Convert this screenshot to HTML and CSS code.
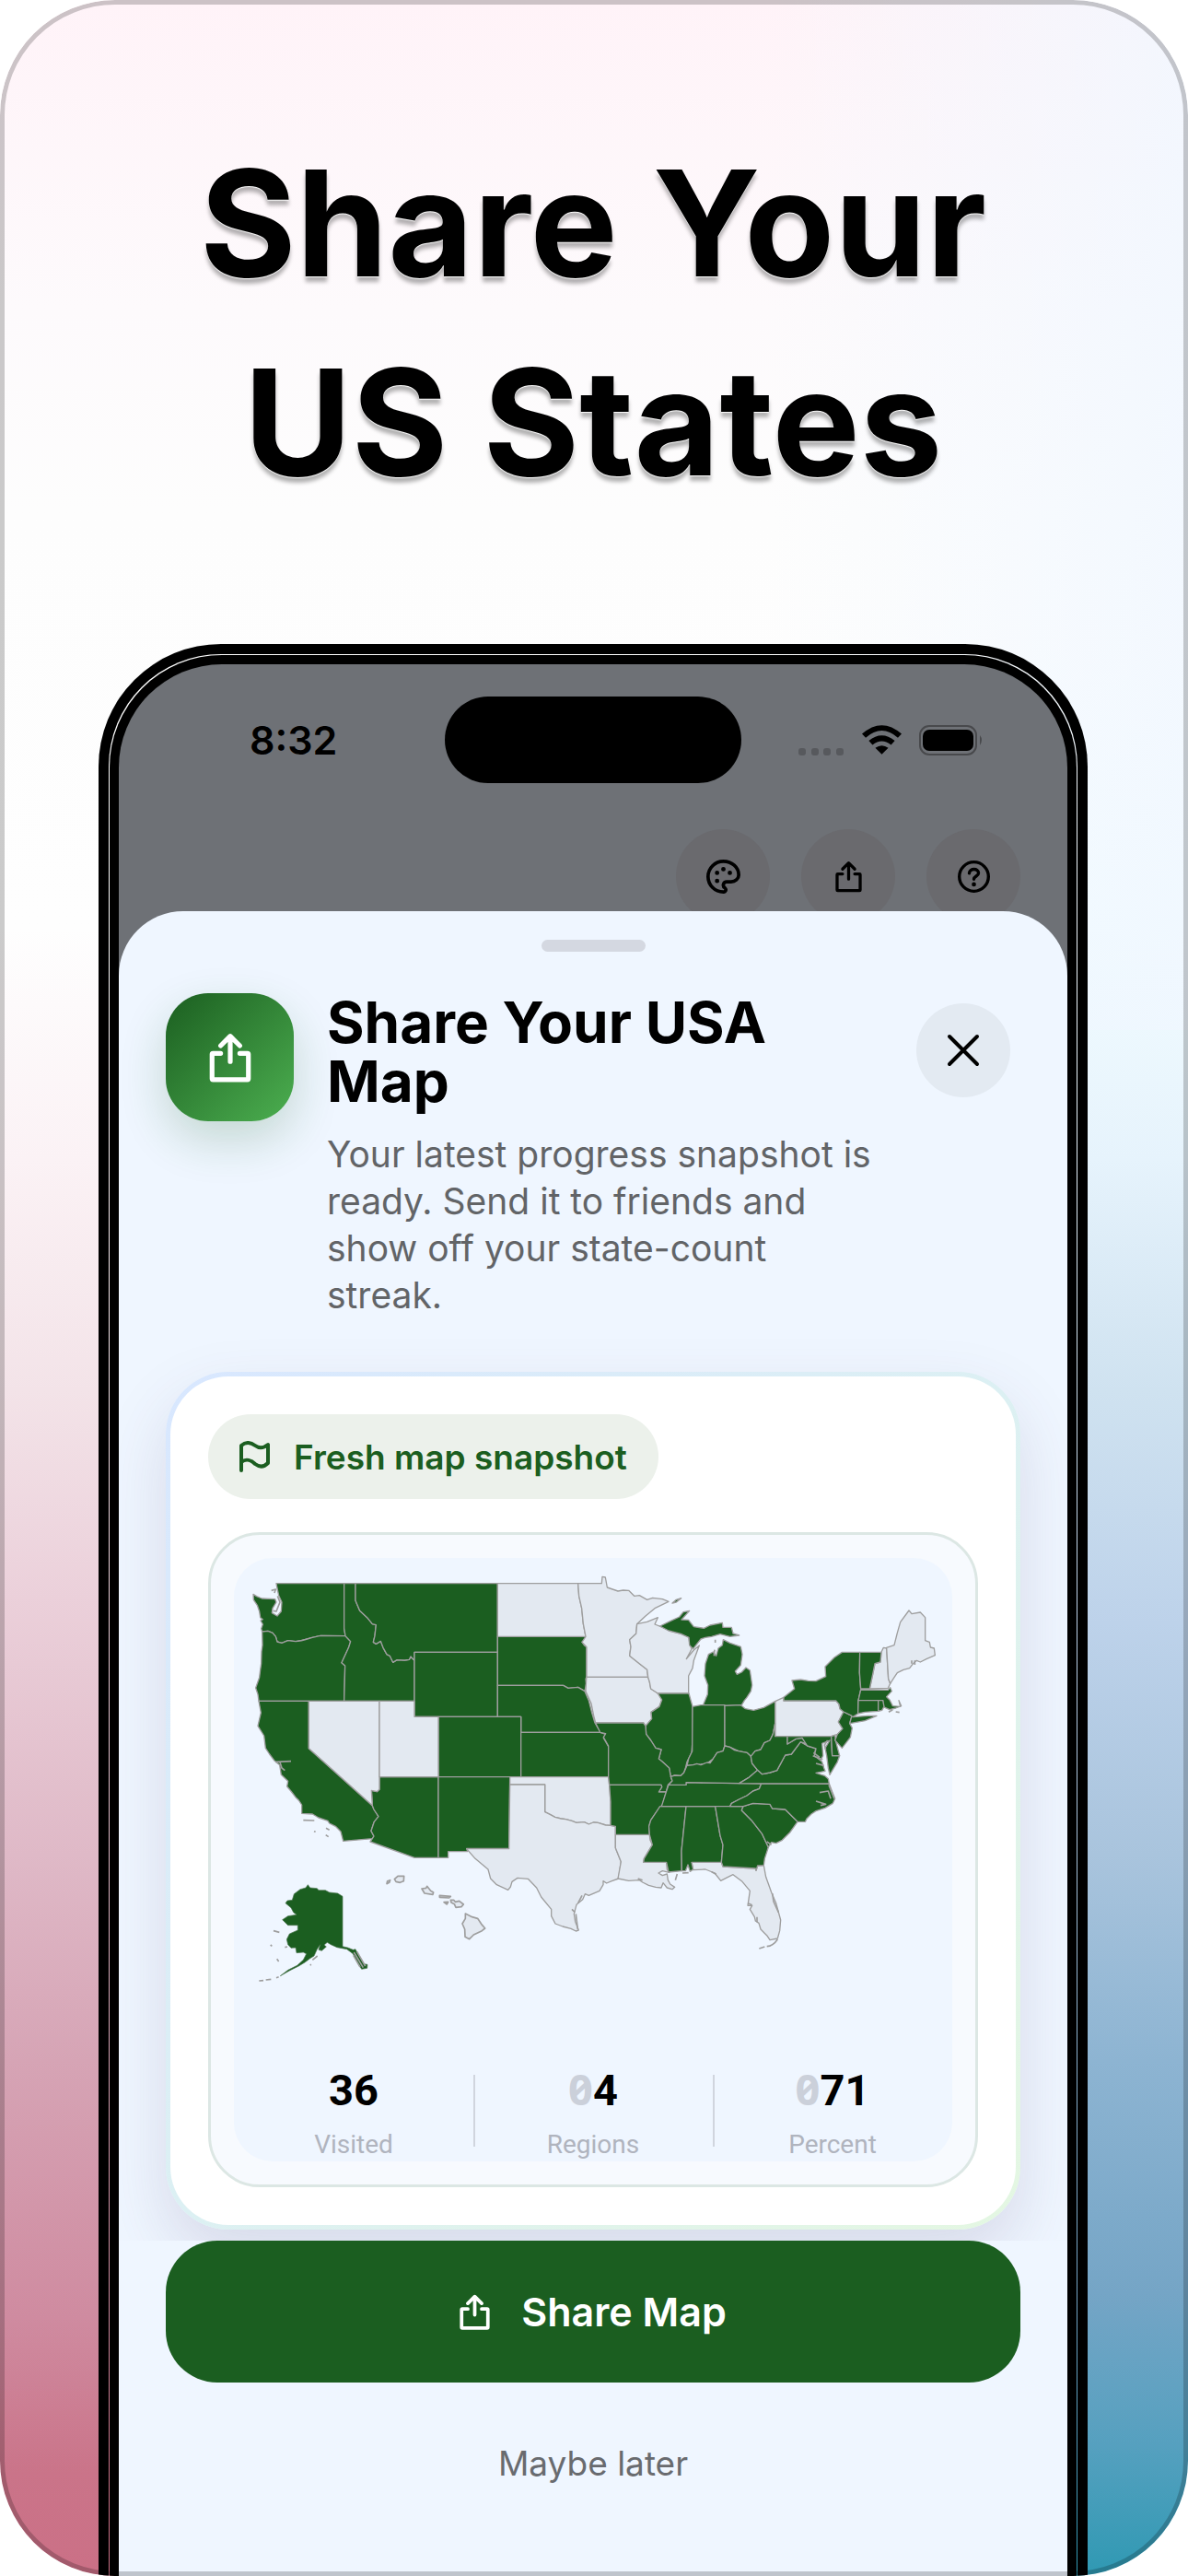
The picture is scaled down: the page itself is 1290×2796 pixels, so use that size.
FILE: index.html
```html
<!DOCTYPE html>
<html lang="en">
<head>
    <meta charset="utf-8">
    <meta name="viewport" content="width=device-width, initial-scale=1">
    <title>Share Your US States</title>
    <link rel="stylesheet" href="styles.css">
</head>
<body>
    <!-- Shared icon shapes -->
    <svg class="icon-defs" width="0" height="0" aria-hidden="true">
        <symbol id="icon-share" viewBox="0 0 88 104">
            <path d="M24 43H8Q6 43 6 45V96Q6 98 8 98H80Q82 98 82 96V45Q82 43 80 43H64M44 60V8M24 27L44 7L64 27" fill="none" stroke="currentColor" stroke-width="10" stroke-linecap="round" stroke-linejoin="round"/>
        </symbol>
    </svg>

    <main class="poster">
        <h1 class="poster-title">Share Your<br>US States</h1>

        <div class="phone">
            <div class="screen">
                <div class="status-bar">
                    <span class="time">8:32</span>
                    <div class="island"></div>
                    <div class="status-icons">
                        <svg class="dots" viewBox="0 0 50 8" width="50" height="8" fill="#57595d">
                            <rect x="0" width="8" height="8" rx="3"/><rect x="14" width="8" height="8" rx="3"/>
                            <rect x="27" width="8" height="8" rx="3"/><rect x="41" width="8" height="8" rx="3"/>
                        </svg>
                        <svg viewBox="0 0 128 94" width="43" height="32">
                            <path d="M0 28Q64 -28 128 28L116 40Q64 -6 12 40Z"/>
                            <path d="M22 50Q64 16 106 50L94 63Q64 40 34 63Z"/>
                            <path d="M43 73Q64 58 85 73L64 94Z"/>
                        </svg>
                        <svg viewBox="0 0 70 33" width="70" height="33">
                            <rect x="1" y="1" width="61" height="31" rx="10" fill="none" stroke="#48494c" stroke-width="2"/>
                            <rect x="4" y="5" width="55" height="23" rx="7"/>
                            <path d="M66 11Q70 16 66 22Z" fill="#48494c"/>
                        </svg>
                    </div>
                </div>

                <div class="toolbar">
                    <button class="tool-button" type="button" aria-label="Theme">
                        <svg viewBox="2 2 20 20" width="37" height="37" fill="none" stroke="currentColor" stroke-width="2" stroke-linecap="round" stroke-linejoin="round">
                            <path d="M12 21a9 9 0 0 1 0 -18c4.97 0 9 3.582 9 8c0 1.06 -.474 2.078 -1.318 2.828c-.844 .75 -1.989 1.172 -3.182 1.172h-2.5a2 2 0 0 0 -1 3.75a1.3 1.3 0 0 1 -1 2.25"/>
                            <path d="M8.3 9.8v.01M12 7.6v.01M15.8 9.8v.01M8.3 14.5v.01" stroke-width="2.6"/>
                        </svg>
                    </button>
                    <button class="tool-button" type="button" aria-label="Share">
                        <svg width="29" height="35"><use href="#icon-share"/></svg>
                    </button>
                    <button class="tool-button" type="button" aria-label="Help">
                        <svg viewBox="0 0 104 104" width="35" height="35" fill="none" stroke="currentColor" stroke-width="10" stroke-linecap="round">
                            <circle cx="52" cy="52" r="47"/>
                            <path d="M37 41C38 24 67 24 67 41C67 50 52 51 52 60"/>
                            <circle cx="52" cy="77" r="7" fill="currentColor" stroke="none"/>
                        </svg>
                    </button>
                </div>

                <section class="sheet">
                    <div class="sheet-scroll">
                        <div class="handle"></div>

                        <header class="sheet-header">
                            <div class="share-tile">
                                <svg width="46" height="54"><use href="#icon-share"/></svg>
                            </div>
                            <div class="sheet-text">
                                <h2>Share Your USA Map</h2>
                                <p>Your latest progress snapshot is ready. Send it to friends and show off your state-count streak.</p>
                            </div>
                            <button class="close-button" type="button" aria-label="Close">
                                <svg viewBox="0 0 36 36" width="36" height="36" stroke="currentColor" stroke-width="4" stroke-linecap="round">
                                    <path d="M3 3L33 33M33 3L3 33"/>
                                </svg>
                            </button>
                        </header>

                        <article class="card">
                            <div class="badge">
                                <svg viewBox="0 0 33 34" width="33" height="34" fill="none" stroke="currentColor" stroke-width="4" stroke-linecap="round" stroke-linejoin="round">
                                    <path d="M2 32V5C8 0 13 2 17 5C21 8 26 8 31 4V24C26 29 21 28 17 25C13 21 7 19 2 23"/>
                                </svg>
                                Fresh map snapshot
                            </div>

                            <div class="map-frame">
                                <div class="map-panel">
                                    <svg class="map" viewBox="14 6 2340 1650" role="img" aria-label="Map of visited US states">
                                        <!-- West -->
                                        <g class="visited">
                                            <path d="M152 89H373V235L377 260L297 259C265 264 245 275 215 278L190 275L170 283L155 279L150 262L140 250L125 244L106 246L103 236L108 222L101 210L108 206L100 200L97 180L90 160L78 142L77 124L88 131L105 138L148 140L152 150L140 170L138 185L155 195L168 180L170 150L160 128L155 105Z"/>
                                            <path d="M106 246L125 244L140 250L150 262L155 279L170 283L190 275L215 278C245 275 265 264 297 259L377 260L394 278L388 297L365 347L376 357L373 472H95L92 450L85 429L97 395L100 370L103 350L104 310L107 290Z"/>
                                            <path d="M373 89H410V145L424 178L448 200L465 221L477 224L473 260L468 280L477 286L492 277L500 298L512 320L522 325L532 346L545 338L570 339L585 337L590 327L602 340V472H373L376 357L365 347L388 297L394 278L377 260L373 235Z"/>
                                            <path d="M410 89H873V313H602V340L590 327L585 337L570 339L545 338L532 346L522 325L512 320L500 298L492 277L477 286L468 280L473 260L477 224L465 221L448 200L424 178L410 145Z"/>
                                            <path d="M602 313H873V523H602Z"/>
                                            <path d="M873 262H1160L1158 272L1148 280L1155 290L1163 296V394L1160 400L1162 415L1157 440L1135 427L1103 430L1087 421H873Z"/>
                                            <path d="M873 421H1087L1103 430L1135 427L1157 440L1170 470L1180 510L1190 543L1200 560L1210 574H949V523H873Z"/>
                                            <path d="M680 523H949V719H680Z"/>
                                            <path d="M949 574H1207L1225 580L1218 592L1234 620V719H949Z"/>
                                            <path d="M95 472H258V626L465 812L470 825L485 848L471 865L461 895L470 912L465 920L370 928L362 897L345 880L325 870L320 862L290 852L270 840L235 838L235 810L225 795L215 785L202 768L187 750L190 733L168 712L163 680L145 665L130 645L117 625L112 585L92 553L102 510Z"/>
                                            <path d="M488 719H680V982H602L458 930L465 920L470 912L461 895L471 865L485 848L470 825L465 812L462 763L480 767L488 760Z"/>
                                            <path d="M680 719H913L910 952H772L775 962H712V982H680Z"/>
                                        </g>
                                        <g class="unvisited">
                                            <path d="M258 472H488V760L480 767L462 763L465 812L258 626Z"/>
                                            <path d="M488 472H602V523H680V719H488Z"/>
                                            <path d="M873 89H1135L1138 130L1147 170L1152 220L1160 262H873Z"/>
                                            <path d="M913 719H1234L1237 745L1241 800V877L1225 876L1200 868L1185 867L1170 873L1155 866L1130 868L1115 862L1095 857L1080 855L1060 850L1045 842L1027 833V744H913Z"/>
                                            <path d="M913 744H1027V833L1045 842L1060 850L1080 855L1095 857L1115 862L1130 868L1155 866L1170 873L1185 867L1200 868L1225 876L1241 877L1257 880V950L1275 995L1267 1050L1245 1058L1228 1065L1217 1058V1070L1205 1090L1170 1105L1158 1100L1150 1118L1130 1135L1126 1150L1122 1165L1126 1190L1137 1218L1128 1221L1112 1213L1085 1206L1061 1197L1048 1172V1150L1015 1110L1000 1080L972 1051L938 1048L920 1060L915 1077L907 1087L870 1070L850 1050L842 1020L800 985L772 953H910Z"/>
                                        </g>
                                        <path class="islets" d="M136 112L150 108L146 120M156 130L164 150L152 180L142 178M150 670L200 668M163 668L170 690L180 698M240 860L276 861M275 896L280 898M314 886L325 892M313 908L322 914M1128 1165L1134 1215M1115 1150L1125 1160M1148 1105L1135 1130"/>

                                        <!-- East -->
                                        <g transform="translate(1110 0)">
                                            <g class="unvisited">
                                                <path d="M25 89H102L104 67L114 69L120 102L155 114L172 111L190 112L208 130L225 128L250 142L268 136L300 140L320 148L275 170L245 195L217 221L214 253L193 272L197 295L193 325L225 350L250 370L253 394H53V296L38 280L50 262L42 220L37 170L28 130Z"/>
                                                <path d="M53 394H253L258 410L262 432L285 447L298 468L290 490L263 508L265 530L245 553L238 543H82L76 520L68 480L50 440L52 400Z"/>
                                                <path d="M217 221L250 214L285 200L275 222L295 230L330 245L360 253L385 262L388 280L395 303L378 335L402 306L420 291L402 340L398 365L385 390V447H285L262 432L258 410L253 394L250 370L225 350L193 325L197 295L193 272L214 253Z"/>
                                                <path d="M667 473L695 460V471H865L875 482L878 497L890 507L873 540L887 562L870 580L850 587H667Z"/>
                                                <path d="M1013 313L1020 298L1030 300L1036 400L1042 415L1035 430L975 432L985 385L992 350L1010 345Z"/>
                                                <path d="M1030 298L1055 290L1065 250L1075 215L1103 177L1112 188L1140 183L1156 200V275L1170 280L1173 297L1185 300L1188 323L1160 335L1140 345L1128 340L1115 352L1105 365L1085 370L1065 380L1055 395L1042 415L1036 400Z"/>
                                                <path d="M147 907H258L260 925L267 940L240 985L238 997H313L315 1020L322 1030L300 1025L287 1032L300 1040L315 1035L318 1055L325 1068L340 1078L332 1085L315 1080L302 1064L296 1080L278 1078L255 1072L235 1062L225 1055L190 1057L155 1050L165 995L147 950Z"/>
                                                <path d="M395 997H492L497 1011L603 1017L605 1024L610 1008L630 1007L637 1045L655 1095L670 1130L685 1185L682 1220L675 1245L650 1250L640 1235L620 1215L614 1195L603 1188L600 1175L585 1150L592 1138L578 1138L585 1090L560 1060L530 1037L512 1046L490 1057L470 1032L440 1020L400 1022Z"/>
                                            </g>
                                            <g class="visited">
                                                <path d="M292 228L325 212L355 198L368 182L388 178L362 207L385 208L402 230L435 235L455 225L495 217L497 232L525 232L530 252L550 258L520 262L488 254L460 262L440 265L425 270L400 302L388 290L386 265L360 253L320 243Z"/>
                                                <path d="M498 272L520 283L555 295L560 320L555 355L537 375L543 385L558 378L572 363L585 372L592 420L588 440L575 460L567 470L558 485L503 487L433 484L447 450L448 420L437 390L440 350L450 320L465 312L475 325L482 300L495 290Z"/>
                                                <path d="M285 447H386L398 490V600L395 640L380 670L375 690L370 705L360 715L340 714L327 718L322 690L300 670L288 660L296 630L278 625L262 600L247 580L245 553L265 530L263 508L290 490L298 468Z"/>
                                                <path d="M398 490L425 485H503V618L497 635L478 640L465 660L445 675L425 678L400 680L380 682L385 660L397 635Z"/>
                                                <path d="M503 487L555 485L570 497L597 502L630 493L667 473V545L660 580L650 600L632 608L620 630L602 635L588 652L575 640L548 635L520 622L503 618Z"/>
                                                <path d="M82 543H238L245 553L247 580L262 600L278 625L296 630L288 660L300 670L322 690L327 718L332 732L318 745L312 768H288L298 752L296 745H127L124 719V618L108 590L115 578L97 574Z"/>
                                                <path d="M127 745H296L298 752L288 768H312L300 810L290 820L262 860L256 880L258 907H147V880L131 877V800Z"/>
                                                <path d="M292 815H377L362 960L363 1025L320 1029L313 997H238L240 985L267 940L258 907L256 880L262 860Z"/>
                                                <path d="M377 815H472L488 910L497 940L492 997H395L400 1020L390 1027L383 1005L375 1025H363L362 960Z"/>
                                                <path d="M297 815L312 768L320 745H377V737L622 741L615 758L595 765L575 780L550 792L525 805L520 815Z"/>
                                                <path d="M327 718L340 714L360 715L370 705L380 682L400 680L412 676L425 680L445 672L455 674L465 660L478 640L497 635L503 618L520 622L535 632L548 635L575 640L588 652L592 675L610 697L580 722L550 740L377 737V745H320L332 732Z"/>
                                                <path d="M472 815H563L558 828L590 860L625 905L645 948L633 985L630 1007L610 1008L605 1024L603 1017L497 1011L492 997L497 940L488 910Z"/>
                                                <path d="M558 828L563 815L595 805L650 808L658 822L700 825L740 865L715 900L690 925L670 935L655 932L645 948L625 905L590 860Z"/>
                                                <path d="M520 815L525 805L550 792L575 780L595 765L615 758L622 741H843L852 765L862 790L855 805L830 820L800 830L785 840L770 855L765 865H740L700 825L658 822L650 808L595 805L563 815Z"/>
                                                <path d="M550 740L580 722L610 697L625 710L650 705L673 698L700 648L720 645L750 605L772 618L800 625L795 645L820 670L826 690L830 700L800 706L828 715L840 725L843 741Z"/>
                                                <path d="M588 652L602 635L620 630L632 608L650 600L660 580L667 545V587H707V612L735 595L755 592L772 612L750 605L720 645L700 648L673 698L650 705L625 710L610 697L592 675Z"/>
                                                <path d="M707 587H850L853 650H877L870 670L845 712L840 690L835 650L830 625L845 600L820 610L823 650L815 665L795 650L800 627L772 618L755 592L735 595L707 612Z"/>
                                                <path d="M850 587L862 583L865 605L877 650H853Z"/>
                                                <path d="M890 507L917 520L910 545L918 560L912 590L885 625L862 600L870 580L887 562L873 540Z"/>
                                                <path d="M695 471V460L730 432L722 405L750 402L775 406L800 407L832 392L830 360L860 330L885 313H943L942 380L946 435L938 470L937 513L920 524L970 520L998 520L960 536L910 545L917 520L890 507L878 497L875 482L865 471Z"/>
                                                <path d="M943 313H1013L1010 345L992 350L985 385L975 432H946L942 380Z"/>
                                                <path d="M946 435L1035 436L1042 428L1047 440L1030 458L1040 468L1050 488L1075 490L1070 470L1078 488L1060 495L1040 500L1018 490V470H938Z"/>
                                                <path d="M938 470H1003V505L960 508L937 513Z"/>
                                                <path d="M1003 470H1018L1022 490L1015 502L1003 505Z"/>
                                                <path d="M332 153L345 142L361 137L345 150Z"/>
                                            </g>
                                            <path class="islets" d="M675 1248Q660 1270 640 1271M633 1272L615 1278M658 1098L662 1125L678 1160M472 272V282M470 305L468 325M348 1035L342 1055M365 1032L385 1031M838 600L828 615L832 630M790 650L822 662M792 640L812 655M800 675L826 682M812 770L840 765L848 790M800 798L832 808L815 812M842 745L860 790M1037 508L1050 500M1060 507L1072 509M1112 350V340M1122 354V340M578 1130L592 1136M608 1175V1192M220 1050L235 1055M460 1028L475 1036M640 930L655 940"/>
                                        </g>

                                        <!-- Alaska and Hawaii -->
                                        <g transform="translate(0 930)">
                                            <path class="visited alaska" d="M255 140L262 150L285 152L290 158L312 158L325 165L352 168L368 178V341L385 345L402 352L410 350L420 370L430 385L438 398L449 400L448 412L430 415L420 400L412 385L402 365L382 350L350 344L330 335L318 328L308 336L315 342L300 355L290 352L295 335L285 350L275 372L262 380L245 393L225 405L195 420L165 437L190 418L220 403L240 385L250 365L240 360L218 362L215 345L200 346L190 335L186 318L195 300L222 288V272H190L172 254L190 242L218 238L208 230L200 215L182 200L188 192L204 190L210 170L230 155L248 150Z"/>
                                            <path class="islets" d="M143 290L162 295M133 336L138 340M154 382L160 390M180 344L188 342M160 440L152 443M135 448L118 450M110 452L96 453M262 402L266 400M270 385L286 372M405 360L435 410M415 358L442 405M403 370L425 408"/>
                                            <g class="unvisited hawaii">
                                                <path d="M512 137L514 128L523 125L520 133Z"/><path d="M537 122L548 112L568 112L567 128L555 133L542 130Z"/>
                                                <path d="M626 153L640 151L643 145L655 160L664 165L662 172L635 168Z"/><path d="M684 175L720 178L715 183L684 181Z"/>
                                                <path d="M698 197L712 196L708 204Z"/><path d="M720 190L730 190L735 196L748 193L762 204L755 212L737 214L732 203L722 198Z"/>
                                                <path d="M768 234L790 245L808 250L820 268L832 282L822 290L795 303L781 317L767 310L766 285L758 267L768 250Z"/>
                                            </g>
                                        </g>
                                    </svg>

                                    <dl class="stats">
                                        <div class="stat"><dd>36</dd><dt>Visited</dt></div>
                                        <div class="stat"><dd><span class="pad-digit">0</span>4</dd><dt>Regions</dt></div>
                                        <div class="stat"><dd><span class="pad-digit">0</span>71</dd><dt>Percent</dt></div>
                                    </dl>
                                </div>
                            </div>
                        </article>
                    </div>

                    <footer class="sheet-footer">
                        <button class="share-button" type="button">
                            <svg width="33" height="39"><use href="#icon-share"/></svg>
                            Share Map
                        </button>
                        <button class="later-button" type="button">Maybe later</button>
                    </footer>
                </section>
            </div>
        </div>
    </main>
</body>
</html>
```
FILE: styles.css
```css
/* --- Base --- */
* { box-sizing: border-box; }
body { margin: 0; background-color: #fff; font-family: Inter, "Liberation Sans", sans-serif; color: #000; }
h1, h2, p, dl, dd { margin: 0; }
button { font: inherit; color: inherit; border: none; padding: 0; cursor: pointer; }
svg { display: block; flex-shrink: 0; }
.icon-defs { position: absolute; }

/* --- Poster --- */
.poster {
    position: relative;
    display: flex;
    flex-direction: column;
    min-height: 100vh;
    padding: 134px 109px 0 107px;
    border-radius: 125px;
    overflow: hidden;
    background:
        linear-gradient(to right, rgba(240, 246, 255, 0) 65%, rgba(240, 247, 255, 0.8)) top / 100% 40% no-repeat,
        linear-gradient(rgba(242, 252, 255, 0) 25%, #f2fcff 36%, #e6f3fc 45%, #cfe2f0 54%, #bdd2ea 63%, #a9c4dd 72%, #8db4d2 80%, #75a5c6 89%, #55a0bf 95%, #2f99b3) right / 50% 100% no-repeat,
        linear-gradient(#fff3f8, #fdfafc 12%, #fdfdfd 20%, #fefefe 36%, #fbf2f5 45%, #f3e3e8 54%, #ebd0da 62%, #dfb9c7 72%, #d6a4b5 80%, #cf8ba0 90%, #ca7489 96%, #cb7086);
}
/* Thin outline drawn on top of everything, the phone included */
.poster::after {
    content: "";
    position: absolute;
    inset: 0;
    border: 5px solid rgba(0, 0, 0, 0.2);
    border-radius: 125px;
    pointer-events: none;
}
.poster-title {
    font-size: 160px;
    line-height: 216px;
    font-weight: 700;
    text-align: center;
    text-shadow: 0 1px 1px #fff, 0 6px 4px rgba(0, 0, 0, 0.3);
}

/* --- Phone --- */
.phone {
    flex: 1;
    display: flex;
    margin-top: 133px;
    padding: 1px 1px 0;
    border: 11px solid #000;
    border-bottom: none;
    border-radius: 133px 133px 0 0;
}
.screen {
    flex: 1;
    display: flex;
    flex-direction: column;
    border: 10px solid #000;
    border-bottom: none;
    border-radius: 122px 122px 0 0;
    background-color: #6e7176;
    overflow: hidden;
}
.status-bar {
    display: grid;
    grid-template-columns: 1fr 322px 1fr;
    align-items: center;
    padding-top: 35px;
}
.time { padding-left: 142px; font-size: 43px; line-height: 52px; font-weight: 600; }
.island { height: 94px; border-radius: 47px; background-color: #000; }
.status-icons {
    display: flex;
    justify-content: flex-end;
    align-items: center;
    gap: 19px;
    padding-right: 91px;
}
.dots { align-self: flex-end; }

.toolbar { display: flex; justify-content: flex-end; gap: 34px; padding: 50px 51px 0; }
.tool-button {
    display: flex;
    align-items: center;
    justify-content: center;
    width: 102px;
    height: 102px;
    border-radius: 50%;
    background-color: #6a6a6e;
}

/* --- Bottom sheet --- */
.sheet {
    position: relative;
    flex: 1;
    margin-top: -13px;
    border-radius: 70px 70px 0 0;
    background-color: #eff6ff;
}
.sheet-scroll { padding: 31px 51px 12px; overflow: hidden; }
.handle { width: 113px; height: 13px; margin: 0 auto 45px; border-radius: 7px; background-color: #d4d8e1; }

.sheet-header { display: flex; align-items: flex-start; }
.share-tile {
    display: flex;
    align-items: center;
    justify-content: center;
    flex-shrink: 0;
    width: 139px;
    height: 139px;
    border-radius: 46px;
    color: #fff;
    background: linear-gradient(135deg, #1b5e20, #4caf50);
    box-shadow: 0 20px 50px rgba(27, 94, 32, 0.2);
}
.sheet-text { flex: 1; margin: 0 24px 0 36px; }
.sheet-text h2 { font-size: 62px; line-height: 64px; font-weight: 700; }
.sheet-text p { margin-top: 21px; font-size: 39px; line-height: 51px; color: #626467; }
.close-button {
    display: flex;
    align-items: center;
    justify-content: center;
    width: 102px;
    height: 102px;
    margin: 11px;
    border-radius: 50%;
    background-color: #e3eaf2;
}

/* --- Snapshot card --- */
.card {
    margin-top: 58px;
    padding: 41px;
    border: 5px solid transparent;
    border-radius: 68px;
    background:
        linear-gradient(#fff, #fff) padding-box,
        linear-gradient(135deg, #d8e7ff, #dcf0f3 50%, #e4f7e2) border-box;
    box-shadow: 0 30px 70px rgba(80, 60, 110, 0.15);
}
.badge {
    display: inline-flex;
    align-items: center;
    gap: 26px;
    height: 92px;
    padding: 0 34px;
    border-radius: 46px;
    background-color: #ecf1eb;
    color: #1b5e20;
    font-size: 37px;
    font-weight: 600;
}
.map-frame {
    margin-top: 36px;
    padding: 25px;
    border: 3px solid #dce7e4;
    border-radius: 56px;
    background-color: #f7fafe;
}
.map-panel { border-radius: 42px; background-color: #eff6ff; }
.map { width: 100%; height: auto; stroke: #9e9e9e; stroke-width: 4; stroke-linejoin: round; }
.visited { fill: #1b5e20; }
.unvisited { fill: #e3e9f1; }
.alaska { stroke: #4d7550; stroke-width: 2; }
.hawaii { stroke-width: 5; }
.islets { fill: none; stroke-width: 5; }

.stats { display: grid; grid-template-columns: 1fr 1fr 1fr; text-align: center; }
.stat { position: relative; display: flex; flex-direction: column; gap: 13px; }
/* Hairline between columns */
.stat + .stat::before {
    content: "";
    position: absolute;
    left: 0;
    top: 11px;
    width: 2px;
    height: 78px;
    background-color: #d0d5de;
}
.stat dd { font-family: Roboto, sans-serif; font-size: 47px; line-height: 56px; font-weight: 700; }
.stat dt { font-family: Roboto, sans-serif; font-size: 28px; line-height: 36px; color: #b0b4be; }
.pad-digit { font-family: "Noto Sans", sans-serif; line-height: 1; font-variant-numeric: slashed-zero; color: #cbd0da; }

/* --- Footer actions --- */
.sheet-footer {
    display: flex;
    flex-direction: column;
    align-items: stretch;
    padding: 0 51px 60px;
}
.share-button {
    display: flex;
    align-items: center;
    justify-content: center;
    gap: 34px;
    height: 154px;
    border-radius: 56px;
    background-color: #1b5e20;
    color: #fff;
    font-size: 43px;
    font-weight: 600;
}
.later-button {
    align-self: center;
    margin-top: 62px;
    background: none;
    font-size: 37px;
    line-height: 52px;
    color: #696b6f;
}
```
